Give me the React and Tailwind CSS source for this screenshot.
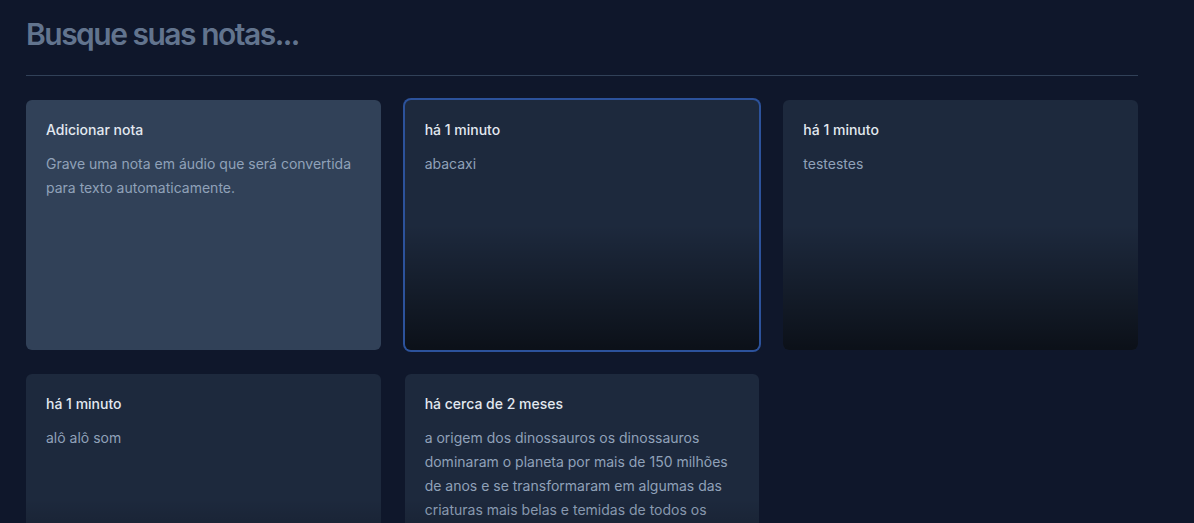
import React from "react";

const notes = [
  { id: 1, date: "há 1 minuto", content: "abacaxi", focused: true },
  { id: 2, date: "há 1 minuto", content: "testestes" },
  { id: 3, date: "há 1 minuto", content: "alô alô som" },
  {
    id: 4,
    date: "há cerca de 2 meses",
    content:
      "a origem dos dinossauros os dinossauros dominaram o planeta por mais de 150 milhões de anos e se transformaram em algumas das criaturas mais belas e temidas de todos os tempos, desde os gigantescos saurópodes até os ferozes terópodes que caçavam suas presas.",
  },
];

export default function App() {
  return (
    <div
      className="min-h-screen bg-slate-900 text-slate-50"
      style={{ fontFamily: "Inter, 'Noto Sans', sans-serif" }}
    >
      <div className="w-[1112px] ml-[26px] pt-4 flex flex-col">
        <input
          type="text"
          placeholder="Busque suas notas..."
          className="w-full h-9 bg-transparent text-3xl font-semibold tracking-tighter outline-none placeholder:text-slate-500"
        />

        <div className="h-px bg-slate-700 mt-[23px] mb-6" />

        <div className="grid grid-cols-3 auto-rows-[250px] gap-6">
          <div className="rounded-md bg-slate-700 p-5 flex flex-col gap-3 text-left">
            <span className="text-sm font-medium text-slate-200">Adicionar nota</span>
            <p className="text-sm leading-6 text-slate-400">
              Grave uma nota em áudio que será convertida para texto automaticamente.
            </p>
          </div>

          {notes.map((note) => (
            <div
              key={note.id}
              className={
                "relative rounded-md bg-slate-800 p-5 flex flex-col gap-3 text-left overflow-hidden" +
                (note.focused ? " ring-2 ring-[#2c529b]" : "")
              }
            >
              <span className="text-sm font-medium text-slate-200">{note.date}</span>
              <p className="text-sm leading-6 text-slate-400">{note.content}</p>
              <div className="absolute bottom-0 inset-x-0 h-1/2 bg-gradient-to-t from-black/60 to-black/0 pointer-events-none" />
            </div>
          ))}
        </div>
      </div>
    </div>
  );
}
